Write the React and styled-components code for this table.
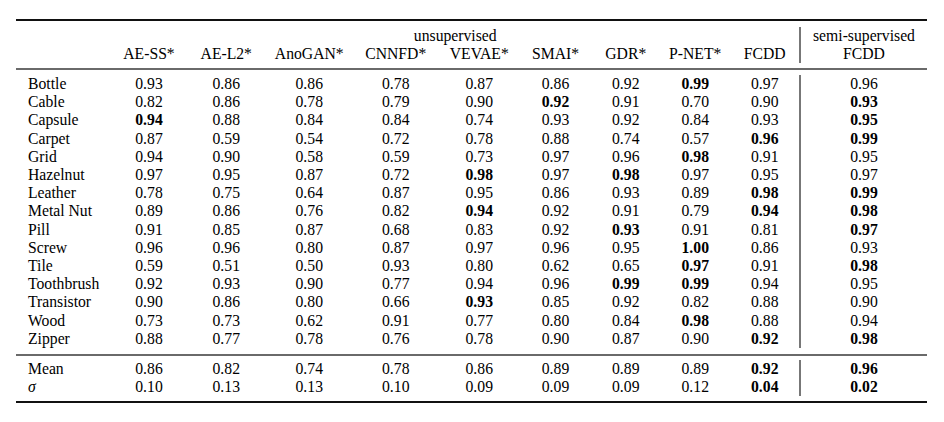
import React from "react";
import styled, { createGlobalStyle } from "styled-components";

const GlobalStyle = createGlobalStyle`
  body {
    margin: 0;
    background: #ffffff;
    color: #000000;
  }
`;

// bold values are written with a leading "*"
const ROWS = [
  ["Bottle", "0.93", "0.86", "0.86", "0.78", "0.87", "0.86", "0.92", "*0.99", "0.97", "0.96"],
  ["Cable", "0.82", "0.86", "0.78", "0.79", "0.90", "*0.92", "0.91", "0.70", "0.90", "*0.93"],
  ["Capsule", "*0.94", "0.88", "0.84", "0.84", "0.74", "0.93", "0.92", "0.84", "0.93", "*0.95"],
  ["Carpet", "0.87", "0.59", "0.54", "0.72", "0.78", "0.88", "0.74", "0.57", "*0.96", "*0.99"],
  ["Grid", "0.94", "0.90", "0.58", "0.59", "0.73", "0.97", "0.96", "*0.98", "0.91", "0.95"],
  ["Hazelnut", "0.97", "0.95", "0.87", "0.72", "*0.98", "0.97", "*0.98", "0.97", "0.95", "0.97"],
  ["Leather", "0.78", "0.75", "0.64", "0.87", "0.95", "0.86", "0.93", "0.89", "*0.98", "*0.99"],
  ["Metal Nut", "0.89", "0.86", "0.76", "0.82", "*0.94", "0.92", "0.91", "0.79", "*0.94", "*0.98"],
  ["Pill", "0.91", "0.85", "0.87", "0.68", "0.83", "0.92", "*0.93", "0.91", "0.81", "*0.97"],
  ["Screw", "0.96", "0.96", "0.80", "0.87", "0.97", "0.96", "0.95", "*1.00", "0.86", "0.93"],
  ["Tile", "0.59", "0.51", "0.50", "0.93", "0.80", "0.62", "0.65", "*0.97", "0.91", "*0.98"],
  ["Toothbrush", "0.92", "0.93", "0.90", "0.77", "0.94", "0.96", "*0.99", "*0.99", "0.94", "0.95"],
  ["Transistor", "0.90", "0.86", "0.80", "0.66", "*0.93", "0.85", "0.92", "0.82", "0.88", "0.90"],
  ["Wood", "0.73", "0.73", "0.62", "0.91", "0.77", "0.80", "0.84", "*0.98", "0.88", "0.94"],
  ["Zipper", "0.88", "0.77", "0.78", "0.76", "0.78", "0.90", "0.87", "0.90", "*0.92", "*0.98"],
];

const SUMMARY = [
  ["Mean", "0.86", "0.82", "0.74", "0.78", "0.86", "0.89", "0.89", "0.89", "*0.92", "*0.96"],
  ["σ", "0.10", "0.13", "0.13", "0.10", "0.09", "0.09", "0.09", "0.12", "*0.04", "*0.02"],
];

const METHODS = ["AE-SS*", "AE-L2*", "AnoGAN*", "CNNFD*", "VEVAE*", "SMAI*", "GDR*", "P-NET*", "FCDD"];

const COLUMNS =
  "95.5px 75px 79.5px 86.5px 86.5px 80.5px 72px 68.5px 70.5px 68.5px 128px";

const Page = styled.div`
  padding: 19px 17px 0 16px;
  font-family: "Liberation Serif", "Tinos", "Times New Roman", "DejaVu Serif", serif;
`;

const Table = styled.div`
  width: 911px;
  border-top: 2px solid #111;
  border-bottom: 2px solid #111;
`;

const Section = styled.div`
  display: grid;
  grid-template-columns: ${COLUMNS};
  font-size: 15.7px;
  line-height: 18.2px;
  padding: ${(p) => p.$pad};
  border-bottom: ${(p) => (p.$rule ? "2px solid #6a6a6a" : "none")};
`;

const Label = styled.div`
  padding-left: 12px;
  white-space: nowrap;
  font-style: ${(p) => (p.$italic ? "italic" : "normal")};
`;

const Cell = styled.div`
  text-align: center;
  white-space: nowrap;
  font-weight: ${(p) => (p.$bold ? "bold" : "normal")};
  border-left: ${(p) => (p.$divider ? "2px solid #777" : "none")};
`;

const GroupTitle = styled.div`
  grid-column: 2 / 11;
  text-align: center;
`;

const renderRow = (row, italic) => {
  const [name, ...values] = row;
  return (
    <React.Fragment key={name}>
      <Label $italic={italic}>{name}</Label>
      {values.map((v, i) => (
        <Cell key={i} $bold={v.startsWith("*")} $divider={i === values.length - 1}>
          {v.replace("*", "")}
        </Cell>
      ))}
    </React.Fragment>
  );
};

export default function App() {
  return (
    <Page>
      <GlobalStyle />
      <Table>
        <Section $pad="6px 0 4.6px" $rule>
          <Label />
          <GroupTitle>unsupervised</GroupTitle>
          <Cell $divider>semi-supervised</Cell>
          <Label />
          {METHODS.map((m) => (
            <Cell key={m}>{m}</Cell>
          ))}
          <Cell $divider>FCDD</Cell>
        </Section>
        <Section $pad="5px 0 6px" $rule>
          {ROWS.map((r) => renderRow(r, false))}
        </Section>
        <Section $pad="4px 0 4.6px">
          {SUMMARY.map((r) => renderRow(r, r[0] === "σ"))}
        </Section>
      </Table>
    </Page>
  );
}
